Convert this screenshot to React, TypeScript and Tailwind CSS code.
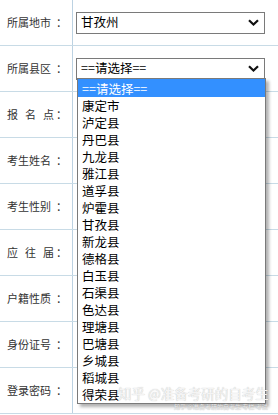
import React from "react";

const rows: { label: string; spaced?: boolean }[] = [
  { label: "所属地市" },
  { label: "所属县区" },
  { label: "报名点", spaced: true },
  { label: "考生姓名" },
  { label: "考生性别" },
  { label: "应往届", spaced: true },
  { label: "户籍性质" },
  { label: "身份证号" },
  { label: "登录密码" },
];

const options = [
  "==请选择==",
  "康定市",
  "泸定县",
  "丹巴县",
  "九龙县",
  "雅江县",
  "道孚县",
  "炉霍县",
  "甘孜县",
  "新龙县",
  "德格县",
  "白玉县",
  "石渠县",
  "色达县",
  "理塘县",
  "巴塘县",
  "乡城县",
  "稻城县",
  "得荣县",
];

function Chevron() {
  return (
    <svg width="11" height="7" viewBox="0 0 11 7" className="shrink-0">
      <path d="M1 1.2 L5.5 5.5 L10 1.2" fill="none" stroke="#111" strokeWidth="2.2" strokeLinejoin="miter" />
    </svg>
  );
}

function FakeSelect({ text }: { text: string }) {
  return (
    <div className="w-[189px] h-[22px] border border-[#7a7a7a] bg-white flex items-center justify-between pl-[4px] pr-[5px] text-[12.5px] text-black">
      <span>{text}</span>
      <Chevron />
    </div>
  );
}

export default function App() {
  return (
    <div
      className="relative w-[278px] h-[415px] bg-white overflow-hidden"
      style={{ fontFamily: '"Noto Sans CJK SC", "Noto Sans", sans-serif' }}
    >
      <div className="flex flex-col">
        {rows.map((r, i) => (
          <div key={i} className="flex h-[46px] border-b border-[#c8dbe6]">
            <div className="w-[73px] shrink-0 border-r border-[#bcd2e2] flex items-center pl-[7px] text-[11px] text-[#333]">
              {r.spaced ? (
                <span className="w-[47px] flex justify-between">
                  {r.label.split("").map((c, j) => (
                    <span key={j}>{c}</span>
                  ))}
                </span>
              ) : (
                <span className="w-[47px]">{r.label}</span>
              )}
              <span className="ml-[2px]">：</span>
            </div>
            <div className="flex-1 flex items-center pl-[3px]">
              {i === 0 && <FakeSelect text="甘孜州" />}
              {i === 1 && <FakeSelect text="==请选择==" />}
            </div>
          </div>
        ))}
      </div>

      {/* open dropdown list */}
      <div className="absolute left-[77px] top-[78px] w-[189px] border border-[#7a7a7a] bg-white shadow-[3px_3px_3px_rgba(0,0,0,0.3)] text-[12.5px] text-black leading-[17px]">
        {options.map((o, i) => (
          <div
            key={i}
            className={
              i === 0
                ? "h-[18px] bg-[#3390ff] text-white pl-[4px] flex items-center"
                : "h-[17px] pl-[4px] flex items-center"
            }
          >
            {o}
          </div>
        ))}
      </div>

      {/* watermark */}
      <div className="absolute left-[118px] top-[383px] text-[13.5px] text-[#f4f4f4] whitespace-nowrap [text-shadow:0_0_1px_rgba(0,0,0,0.3)]">
        知乎 @准备考研的自考生
      </div>
      <div className="absolute left-[174px] top-[402px] text-[6px] text-[#f0f0f0] whitespace-nowrap [text-shadow:0_0_1px_rgba(0,0,0,0.35)]">
        知乎 @准备考研的自考生 专栏 考试
      </div>
    </div>
  );
}
